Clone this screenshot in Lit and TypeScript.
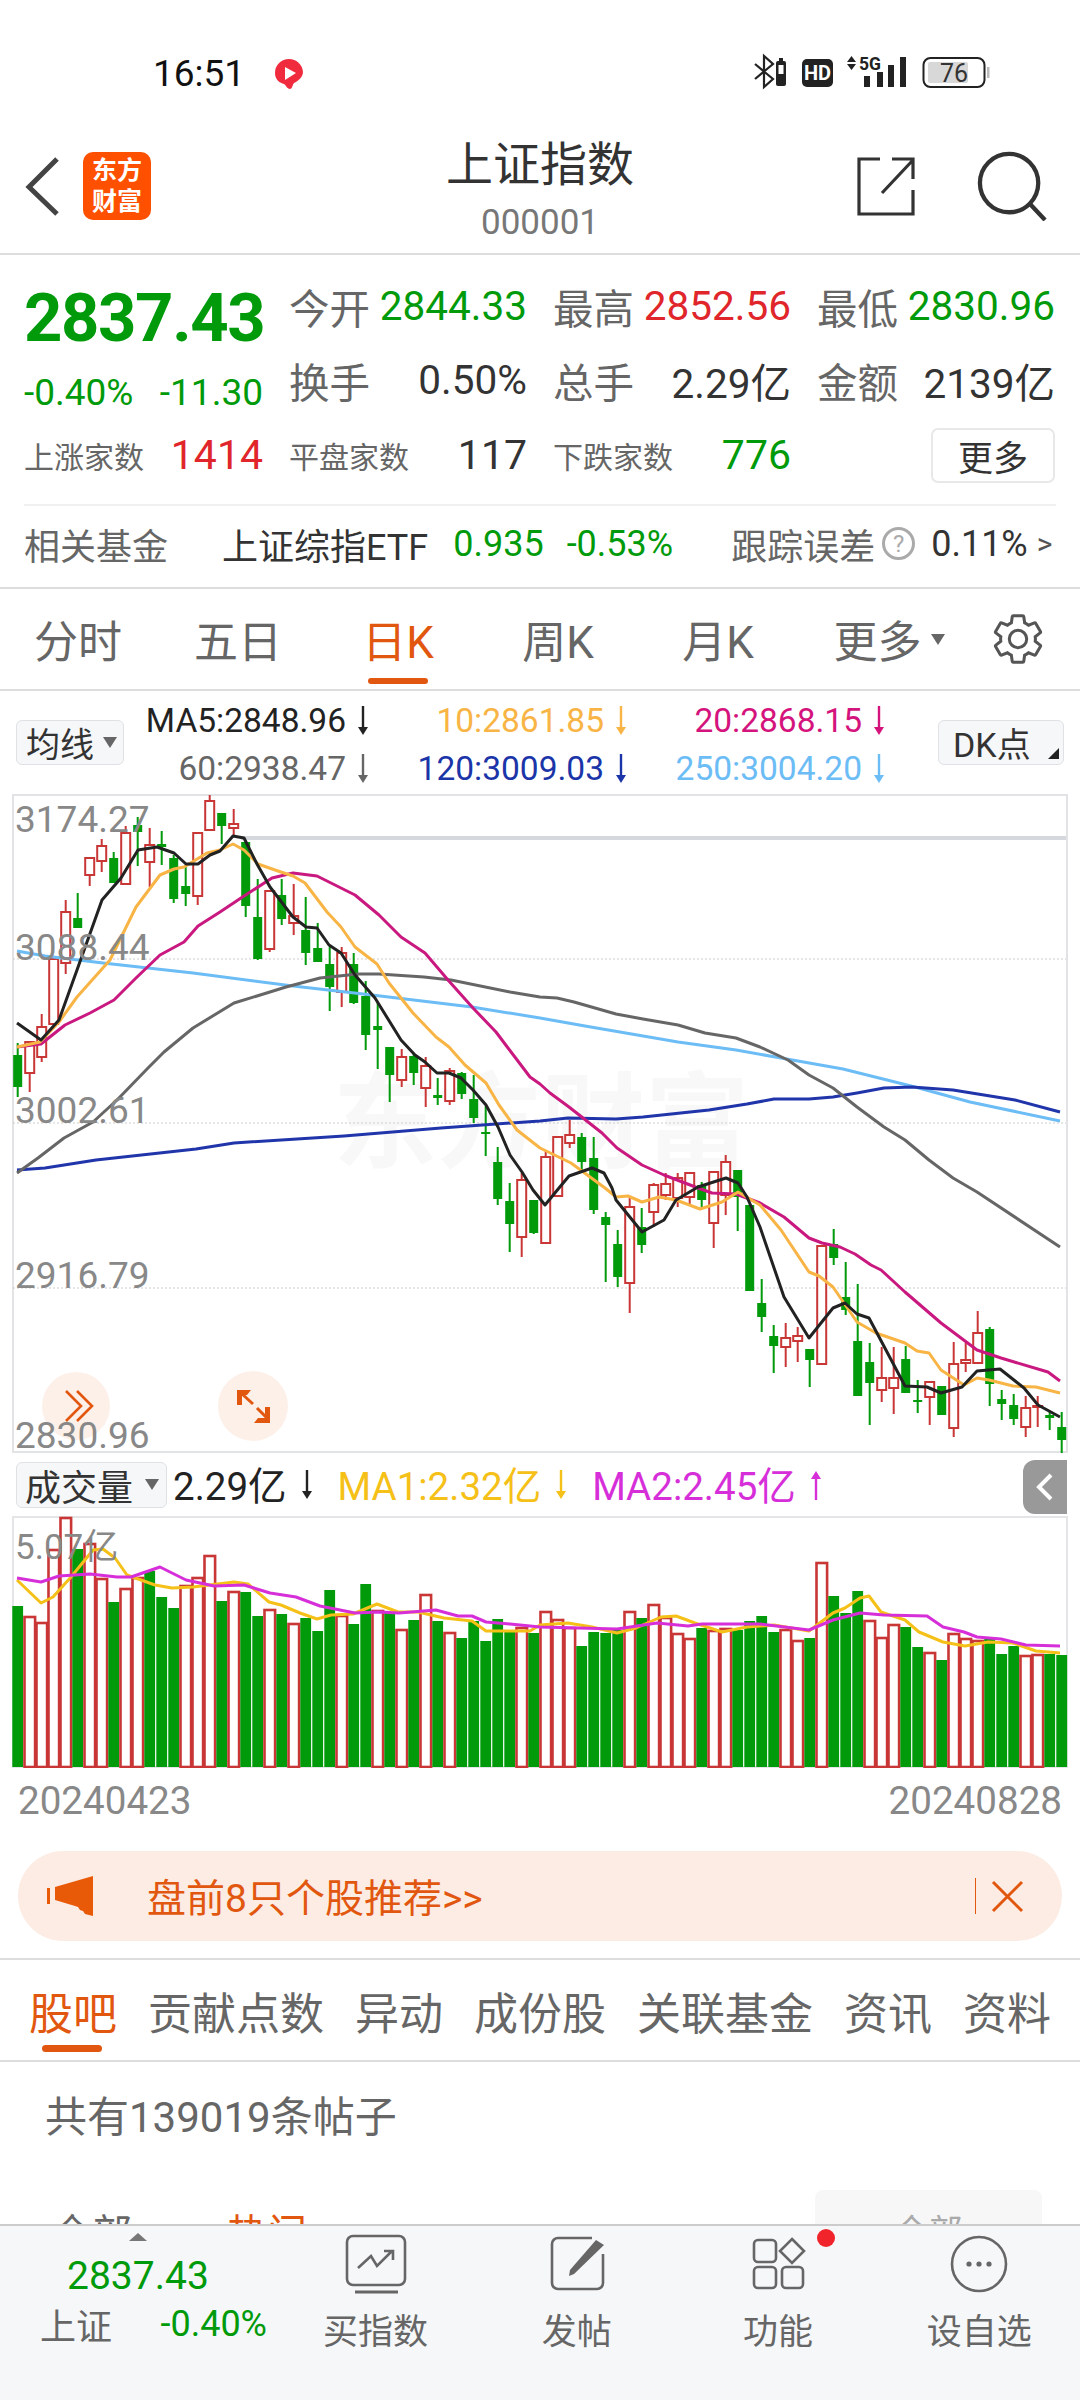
import { LitElement, html, svg, css } from "lit";
import { customElement } from "lit/decorators.js";

// [body top, body bottom, wick top, wick bottom, colour], all in page pixels
type Candle = [number, number, number, number, "r" | "g"];

const CANDLES: Candle[] = [
  [1055, 1087, 1043, 1097, "g"], [1042, 1073, 1042, 1092, "r"], [1027, 1057, 1014, 1062, "r"], [959, 1024, 959, 1024, "r"],
  [912, 963, 900, 974, "r"], [918, 928, 893, 928, "g"], [858, 875, 857, 886, "r"], [846, 861, 839, 872, "r"],
  [858, 883, 852, 883, "g"], [833, 884, 826, 884, "r"], [825, 832, 817, 866, "g"], [845, 862, 828, 887, "r"],
  [844, 847, 831, 865, "g"], [858, 899, 855, 903, "g"], [886, 894, 865, 906, "g"], [833, 896, 833, 905, "r"],
  [801, 830, 795, 830, "r"], [813, 826, 813, 844, "g"], [824, 828, 809, 835, "r"], [842, 906, 842, 917, "g"],
  [917, 959, 879, 960, "g"], [891, 949, 890, 952, "r"], [895, 919, 879, 925, "g"], [916, 923, 884, 935, "r"],
  [930, 953, 897, 965, "g"], [948, 962, 923, 962, "g"], [964, 987, 947, 1011, "g"], [953, 992, 947, 1007, "r"],
  [964, 1003, 953, 1004, "g"], [996, 1035, 981, 1050, "g"], [1026, 1030, 1003, 1069, "g"], [1047, 1075, 1047, 1102, "g"],
  [1057, 1080, 1049, 1087, "r"], [1056, 1073, 1053, 1085, "g"], [1066, 1088, 1057, 1107, "r"], [1095, 1098, 1078, 1105, "g"],
  [1071, 1101, 1068, 1105, "r"], [1073, 1094, 1072, 1099, "g"], [1099, 1118, 1075, 1123, "g"], [1132, 1133, 1106, 1156, "g"],
  [1162, 1199, 1147, 1205, "g"], [1201, 1224, 1183, 1252, "g"], [1180, 1237, 1173, 1257, "r"], [1200, 1233, 1200, 1234, "g"],
  [1157, 1243, 1150, 1243, "r"], [1137, 1196, 1137, 1196, "r"], [1135, 1143, 1120, 1148, "r"], [1137, 1162, 1133, 1170, "g"],
  [1158, 1210, 1137, 1214, "g"], [1217, 1225, 1212, 1282, "g"], [1244, 1277, 1230, 1287, "g"], [1207, 1283, 1198, 1313, "r"],
  [1227, 1245, 1208, 1253, "g"], [1185, 1212, 1183, 1227, "r"], [1184, 1195, 1173, 1200, "r"], [1178, 1198, 1173, 1207, "r"],
  [1173, 1197, 1173, 1204, "r"], [1185, 1200, 1182, 1207, "g"], [1172, 1223, 1172, 1248, "r"], [1162, 1195, 1155, 1215, "r"],
  [1170, 1197, 1170, 1231, "g"], [1205, 1291, 1205, 1291, "g"], [1303, 1317, 1279, 1332, "g"], [1336, 1346, 1325, 1373, "g"],
  [1338, 1347, 1323, 1367, "r"], [1336, 1341, 1327, 1362, "r"], [1349, 1360, 1349, 1387, "g"], [1246, 1364, 1246, 1364, "r"],
  [1244, 1258, 1229, 1265, "g"], [1297, 1310, 1262, 1315, "g"], [1341, 1396, 1284, 1396, "g"], [1362, 1383, 1343, 1425, "g"],
  [1378, 1390, 1347, 1402, "r"], [1378, 1388, 1347, 1414, "r"], [1359, 1393, 1346, 1393, "g"], [1400, 1401, 1380, 1413, "g"],
  [1382, 1397, 1382, 1425, "r"], [1386, 1415, 1386, 1415, "g"], [1364, 1428, 1342, 1437, "r"], [1360, 1363, 1343, 1372, "r"],
  [1333, 1363, 1311, 1363, "r"], [1329, 1384, 1327, 1406, "g"], [1399, 1404, 1390, 1420, "g"], [1405, 1419, 1394, 1425, "g"],
  [1408, 1427, 1396, 1437, "r"], [1406, 1407, 1396, 1427, "r"], [1415, 1418, 1412, 1430, "g"], [1427, 1440, 1412, 1453, "g"],
];

const MA5 = "17,1023 41,1040 59,1020 77,970 102,900 121,878 138,850 157,847 174,853 186,864 198,864 210,855 220,851 233,836 244,838 257,864 270,887 293,917 306,927 317,928 329,945 341,953 355,975 375,998 401,1040 415,1055 425,1062 437,1073 449,1073 461,1078 473,1090 486,1105 498,1127 510,1155 522,1172 533,1190 545,1205 559,1188 569,1176 592,1168 604,1173 612,1188 616,1200 642,1232 664,1220 676,1200 698,1187 726,1178 738,1183 747,1197 760,1227 784,1297 809,1338 833,1308 845,1303 857,1314 869,1318 905,1386 927,1387 941,1393 962,1387 977,1371 1000,1369 1024,1388 1038,1405 1060,1417";
const MA10 = "17,1047 40,1042 59,1022 77,997 110,960 136,907 160,875 174,869 184,867 207,853 220,850 233,844 244,850 258,864 275,870 293,876 305,883 327,912 341,927 355,947 377,964 389,983 413,1013 436,1037 449,1047 465,1065 486,1083 499,1105 517,1130 540,1148 571,1163 605,1188 616,1197 628,1196 642,1202 659,1197 676,1200 700,1209 722,1202 738,1192 760,1205 781,1230 809,1272 819,1276 833,1287 857,1322 876,1333 905,1343 917,1351 929,1353 941,1370 964,1385 977,1378 989,1380 1013,1386 1036,1387 1060,1393";
const MA20 = "17,1047 41,1044 65,1025 90,1013 114,1000 136,978 160,955 184,942 198,926 220,912 241,898 272,878 293,873 317,876 355,895 379,915 401,937 425,953 448,980 473,1008 496,1032 508,1048 530,1077 540,1084 550,1093 569,1107 583,1118 602,1133 617,1148 642,1165 664,1175 698,1188 712,1193 736,1194 760,1203 784,1217 809,1238 822,1243 840,1247 855,1254 871,1265 881,1270 905,1292 941,1323 977,1350 1001,1358 1048,1372 1060,1381";
const MA60 = "17,1173 38,1158 64,1138 93,1122 117,1100 148,1068 164,1052 193,1028 234,1003 257,996 286,987 320,978 358,974 379,974 424,977 451,980 510,992 540,997 557,998 574,1002 616,1014 643,1019 678,1025 705,1033 736,1038 760,1047 788,1060 809,1075 833,1088 857,1107 884,1127 905,1140 929,1160 953,1178 977,1192 1060,1247";
const MA120 = "17,1170 45,1168 96,1160 196,1149 234,1143 344,1136 441,1128 540,1121 568,1118 616,1119 643,1117 709,1110 747,1104 774,1099 809,1099 833,1097 857,1093 884,1088 912,1087 953,1090 1015,1100 1060,1112";
const MA250 = "17,951 45,956 103,963 193,973 293,986 372,995 472,1007 540,1018 585,1026 678,1042 736,1050 781,1058 843,1069 915,1087 970,1102 1060,1121";

// distance of each volume bar's top from the top of the volume panel
const VOL_TOPS = [90, 100, 106, 33, 1, 33, 27, 62, 86, 72, 61, 55, 81, 92, 69, 61, 39, 85, 75, 76, 100, 93, 98, 107, 102, 115, 74, 99, 108, 68, 94, 97, 113, 104, 78, 105, 116, 122, 105, 125, 103, 116, 111, 117, 95, 103, 111, 130, 116, 117, 114, 95, 102, 88, 101, 117, 122, 112, 114, 112, 114, 105, 100, 116, 113, 124, 122, 46, 80, 97, 75, 104, 121, 108, 111, 131, 136, 144, 117, 122, 124, 121, 138, 130, 139, 138, 138, 139];
const VOL_COLORS = "grrrrgrrgrrgggrrrgrggrgrgggrggrgrgrgrgggggrgrrrggggrgrrrrgrrggggrrgrgggrrrggrgrrrgggrrgg";

const VOL_MA1 = "17,1580 41,1603 53,1597 71,1577 93,1550 103,1549 115,1558 127,1575 155,1585 172,1588 193,1587 234,1582 248,1584 269,1602 281,1605 300,1613 317,1619 331,1615 353,1614 377,1604 398,1612 418,1612 444,1618 472,1621 486,1631 513,1631 530,1631 540,1625 568,1623 592,1627 617,1633 636,1628 661,1617 676,1616 695,1623 722,1632 747,1627 774,1625 809,1631 833,1613 845,1608 860,1598 869,1596 881,1612 905,1620 919,1632 943,1642 965,1646 988,1642 1013,1643 1036,1651 1060,1653";
const VOL_MA2 = "17,1578 41,1582 59,1576 90,1574 117,1577 131,1577 160,1567 186,1580 214,1586 244,1585 270,1593 296,1597 320,1606 355,1613 379,1612 399,1613 436,1610 458,1616 472,1616 486,1622 510,1624 540,1627 617,1629 657,1623 688,1626 702,1624 760,1624 809,1630 833,1620 860,1613 884,1615 927,1616 943,1627 964,1632 977,1637 1001,1639 1026,1645 1060,1646";

const RED = "#c93636";
const GREEN = "#009a0a";
const barX = (i: number) => 17.7 + 12 * i;

const arrow = (color: string, up = false) => html`
  <svg class="arrow" viewBox="0 0 12 30" style="color:${color}">
    ${up
      ? svg`<path d="M6 30V4" stroke="currentColor" stroke-width="2.4" /><path d="M1 9L6 1l5 8z" fill="currentColor" />`
      : svg`<path d="M6 0v26" stroke="currentColor" stroke-width="2.4" /><path d="M1 21l5 8 5-8z" fill="currentColor" />`}
  </svg>
`;

@customElement("kline-chart")
class KlineChart extends LitElement {
  static styles = css`
    :host { display: block; height: 659px; }
    svg { display: block; }
    .tick { font: 37px Roboto, sans-serif; fill: #888; }
    .mark { font: bold 104px "Noto Sans CJK SC", sans-serif; fill: #f8f8f8; }
    polyline { fill: none; stroke-width: 3; stroke-linejoin: round; }
  `;

  private candle(c: Candle, i: number) {
    const x = barX(i);
    const color = c[4] === "r" ? RED : GREEN;
    return svg`
      <line x1=${x} x2=${x} y1=${c[2]} y2=${c[3]} stroke=${color} stroke-width="2" />
      ${c[4] === "r"
        ? svg`<rect x=${x - 4.5} y=${c[0]} width="9" height=${c[1] - c[0]} fill="#fff" stroke=${color} stroke-width="2" />`
        : svg`<rect x=${x - 4.5} y=${c[0]} width="9" height=${Math.max(2, c[1] - c[0])} fill=${color} />`}
    `;
  }

  render() {
    return html`
      <svg width="1080" height="659" viewBox="0 794 1080 659">
        <text class="mark" x="333" y="1160">东方财富</text>
        <rect x="13" y="795" width="1054" height="657" fill="none" stroke="#e2e3e5" stroke-width="2" />
        <line x1="241" x2="1066" y1="838" y2="838" stroke="#d5d9dd" stroke-width="4" />
        ${[959, 1123, 1288].map(
          (y) => svg`<line x1="13" x2="1066" y1=${y} y2=${y} stroke="#ccc" stroke-dasharray="2 2" />`,
        )}
        <circle cx="76" cy="1406" r="34" fill="#fdf0e9" />
        <circle cx="253" cy="1406" r="35" fill="#fdf0e9" />
        <path d="M66 1391l15 15-15 15M77 1391l15 15-15 15" fill="none" stroke="#e2570f" stroke-width="2.6" />
        <path d="M237 1390h14l-4 5h-5v10h-5zM270 1423h-16l4-5h7v-11h5z" fill="#e2570f" />
        <path d="M241 1393l12 11M257 1408l11 11" stroke="#e2570f" stroke-width="3" />
        ${CANDLES.map((c, i) => this.candle(c, i))}
        <polyline points=${MA250} stroke="#6cbcf5" />
        <polyline points=${MA120} stroke="#2135ab" />
        <polyline points=${MA60} stroke="#666" />
        <polyline points=${MA20} stroke="#c9187f" />
        <polyline points=${MA10} stroke="#f8b445" />
        <polyline points=${MA5} stroke="#222" />
        <text class="tick" x="15" y="832">3174.27</text>
        <text class="tick" x="15" y="960">3088.44</text>
        <text class="tick" x="15" y="1123">3002.61</text>
        <text class="tick" x="15" y="1288">2916.79</text>
        <text class="tick" x="15" y="1448">2830.96</text>
      </svg>
    `;
  }
}

@customElement("volume-chart")
class VolumeChart extends LitElement {
  static styles = css`
    :host { display: block; height: 252px; }
    svg { display: block; }
    .tick { font: 35px Roboto, "Noto Sans CJK SC", sans-serif; fill: #888; }
    polyline { fill: none; stroke-width: 3; stroke-linejoin: round; }
  `;

  render() {
    return html`
      <svg width="1080" height="252" viewBox="0 1516 1080 252">
        <rect x="13" y="1517" width="1054" height="250" fill="none" stroke="#e4e5e7" stroke-width="2" />
        ${VOL_TOPS.map((t, i) => {
          const x = barX(i);
          const top = 1516 + t;
          return VOL_COLORS[i] === "r"
            ? svg`<rect x=${x - 5.2} y=${top + 1} width="10.6" height=${1766 - top} fill="#fff" stroke=${RED} stroke-width="2.6" />`
            : svg`<rect x=${x - 5.4} y=${top} width="10.8" height=${1767 - top} fill=${GREEN} />`;
        })}
        <polyline points=${VOL_MA1} stroke="#f5c018" />
        <polyline points=${VOL_MA2} stroke="#d62fd9" />
        <text class="tick" x="15" y="1559">5.07亿</text>
      </svg>
    `;
  }
}

@customElement("app-root")
class AppRoot extends LitElement {
  static styles = css`
    :host {
      display: flex;
      flex-direction: column;
      width: 1080px;
      height: 2400px;
      overflow: hidden;
      background: #fff;
      font-family: Roboto, "Noto Sans CJK SC", sans-serif;
      color: #333;
    }
    svg { display: block; flex: none; }
    .up { color: #e0252b; }
    .down { color: #009a0a; }
    .label { color: #666; }

    .status { height: 135px; flex: none; display: flex; align-items: center; padding: 12px 0 0 153px; box-sizing: border-box; }
    .status .time { font-size: 37px; color: #111; width: 121px; }
    .status .right { margin-left: 446px; margin-top: -8px; }

    .nav { height: 120px; flex: none; display: flex; align-items: center; border-bottom: 2px solid #ddd; box-sizing: border-box; padding: 0 0 17px 22px; position: relative; }
    .logo { width: 68px; height: 68px; margin-left: 21px; border-radius: 10px; background: #ff5000; color: #fff; font-size: 25px; font-weight: 700; line-height: 31px; text-align: center; display: flex; flex-direction: column; justify-content: center; }
    .title { position: absolute; left: 0; right: 0; top: 0; text-align: center; }
    .title b { display: block; font-weight: 400; font-size: 47px; line-height: 60px; }
    .title span { display: block; font-size: 35px; line-height: 40px; color: #777; margin-top: 8px; }
    .nav .tools { margin-left: auto; margin-right: 33px; display: flex; gap: 61px; align-items: center; }

    .quote { flex: none; display: grid; grid-template-columns: 239px 238px 238px 238px; grid-template-rows: 74px 74px 76px; column-gap: 26px; padding: 14px 24px 0; align-items: center; }
    .price { font-size: 67px; font-weight: 700; letter-spacing: -1.4px; padding-top: 24px; line-height: 70px; white-space: nowrap; }
    .change { display: flex; justify-content: space-between; font-size: 37px; padding-top: 24px; }
    .cell { display: flex; justify-content: space-between; align-items: center; font-size: 40.5px; white-space: nowrap; }
    .small .label-sm { font-size: 30px; color: #666; }
    .small { font-size: 41px; }
    .more-btn { justify-self: end; width: 124px; height: 55px; box-sizing: border-box; border: 2px solid #e8e8e8; border-radius: 7px; font-size: 35px; display: flex; align-items: center; justify-content: center; }

    .related { flex: none; margin: 11px 24px 0; height: 83px; padding-bottom: 6px; border-top: 2px solid #f0f0f0; box-sizing: border-box; display: flex; align-items: center; font-size: 36px; white-space: nowrap; }
    .related .etf { margin-left: 54px; }
    .related .num { margin-left: 25px; }
    .related .diff { margin-left: 23px; }
    .related .err { margin-left: 58px; }
    .related .help { width: 33px; height: 33px; border: 3px solid #aaa; box-sizing: border-box; border-radius: 50%; color: #aaa; font-size: 24px; display: flex; align-items: center; justify-content: center; margin: 0 16px 0 7px; }
    .related .gt { margin-left: 9px; font-size: 30px; color: #555; }
    .line { height: 2px; flex: none; background: #ddd; }

    .periods { flex: none; height: 102px; display: grid; grid-template-columns: repeat(6, 160px) 120px; margin-left: -2px; border-bottom: 2px solid #ddd; box-sizing: border-box; font-size: 44px; color: #666; }
    .periods > div { display: flex; align-items: center; justify-content: center; position: relative; }
    .periods .on { color: #e2570f; }
    .periods .on::after { content: ""; position: absolute; left: 50px; width: 60px; height: 6px; bottom: 5px; border-radius: 3px; background: #e2570f; }
    .periods .more { padding-left: 22px; }
    .tri { display: inline-block; width: 0; height: 0; border: 7px solid transparent; border-top: 11px solid #666; border-bottom: 0; margin-left: 9px; }

    .legend-bar { flex: none; height: 103px; display: flex; align-items: center; box-sizing: border-box; position: relative; }
    .pill { box-sizing: border-box; height: 45px; background: #f6f7f9; border: 1.5px solid #e0e1e4; border-radius: 6px; display: flex; align-items: center; font-size: 34px; white-space: nowrap; }
    .legend-bar .pick { width: 108px; margin-left: 16px; padding-left: 9px; }
    .legend-bar .dk { width: 126px; margin-left: auto; margin-right: 16px; padding-left: 14px; position: relative; }
    .dk::after { content: ""; position: absolute; right: 4px; bottom: 5px; border-left: 11px solid transparent; border-bottom: 11px solid #222; }
    .legend { display: grid; grid-template-columns: repeat(3, 258px); grid-auto-rows: 48px; margin: 4px 0 0 -6px; font-size: 33.5px; }
    .legend > div { display: flex; align-items: center; justify-content: flex-end; gap: 11px; padding-right: 7px; white-space: nowrap; }
    .arrow { width: 12px; height: 30px; }

    .vol-bar { flex: none; height: 63px; display: flex; align-items: center; position: relative; font-size: 38.5px; white-space: nowrap; }
    .vol-bar > span { margin-top: -3px; }
    .vol-bar .pick { width: 151px; margin-left: 16px; padding-left: 8px; height: 46px; font-size: 36px; margin-right: 6px; }
    .vol-bar .arrow { margin: 0 25px 0 14px; }
    .vol-bar .pick .tri { margin-left: 12px; }
    .collapse { position: absolute; right: 13px; top: 7px; width: 44px; height: 54px; border-radius: 12px 0 0 12px; background: #999; display: flex; align-items: center; justify-content: center; }

    .dates { flex: none; height: 83px; padding: 13px 18px 0; box-sizing: border-box; display: flex; justify-content: space-between; font-size: 38.6px; line-height: 40px; color: #888; }

    .banner { flex: none; height: 90px; margin: 0 18px; border-radius: 45px; background: #fcece3; display: flex; align-items: center; color: #e2570f; font-size: 39px; }
    .banner .speak { margin-left: 29px; }
    .banner .txt { margin-left: 54px; margin-top: -2px; }
    .banner .sep { margin-left: auto; width: 1.5px; height: 36px; background: #e2570f; }
    .banner .close { margin: 0 38px 0 15px; }

    .news-tabs { flex: none; margin-top: 17px; height: 104px; box-sizing: border-box; padding: 2px 0 0 29px; border-top: 2px solid #ddd; border-bottom: 2px solid #ddd; display: flex; gap: 31px; align-items: center; font-size: 44px; color: #666; white-space: nowrap; }
    .news-tabs > div { position: relative; }
    .news-tabs .on { color: #e2570f; }
    .news-tabs .on::after { content: ""; position: absolute; left: 13px; width: 60px; height: 7px; bottom: -9px; border-radius: 4px; background: #e2570f; }

    .posts { flex: 1; min-height: 0; overflow: hidden; padding: 0 38px 0 45px; }
    .posts .count { font-size: 42px; line-height: 50px; color: #666; margin-top: 31px; }
    .filter { margin-top: 47px; display: flex; font-size: 40px; }
    .filter span { margin-top: 12px; }
    .filter .hot { margin-left: 95px; color: #e2570f; }
    .filter .all { margin-left: 7px; }
    .filter .box { margin-left: auto; width: 227px; height: 90px; background: #f7f7f8; border-radius: 8px; display: flex; justify-content: center; color: #aaa; font-size: 34px; padding-top: 15px; box-sizing: border-box; }

    .dock { flex: none; height: 176px; background: #f6f7f9; border-top: 2px solid #ccc; box-sizing: border-box; display: flex; }
    .dock .left { width: 275px; flex: none; box-sizing: border-box; padding-top: 7px; }
    .dock .mini { width: 0; height: 0; border: 9px solid transparent; border-top: 0; border-bottom: 8px solid #777; margin-left: 129px; }
    .dock .p { padding-left: 67px; font-size: 39px; line-height: 44px; margin-top: 13px; }
    .dock .row { display: flex; justify-content: space-between; padding: 0 8px 0 40px; margin-top: 0; font-size: 36px; align-items: center; }
    .dock .row span:first-child { color: #666; }
    .dock .item { flex: 1; display: flex; flex-direction: column; align-items: center; font-size: 35px; color: #666; padding-top: 8px; position: relative; }
    .dock .item span { line-height: 40px; margin-top: 19px; }
    .dot { position: absolute; left: 139px; top: 3px; width: 18px; height: 18px; border-radius: 50%; background: #f0242a; }
    .ico { fill: none; stroke: #666; stroke-width: 2.6; }
  `;

  private statusIcons() {
    return html`
      <svg class="right" width="245" height="42" viewBox="750 50 245 42">
        <path d="M755 65l18 15-9 8V57l9 8-18 15" fill="none" stroke="#222" stroke-width="2.2" />
        <rect x="776" y="62" width="10" height="25" rx="2" fill="#222" />
        <rect x="778.5" y="66" width="5" height="9" fill="#fff" />
        <rect x="779" y="59" width="4" height="3" fill="#222" />
        <rect x="802" y="60" width="31" height="28" rx="5" fill="#222" />
        <text x="817.5" y="81" text-anchor="middle" font-size="20" font-weight="700" fill="#fff" font-family="Roboto">HD</text>
        <path d="M847 63l4.5-6 4.5 6zM847 65h9l-4.5 6z" fill="#222" />
        <text x="859" y="71" font-size="18" font-weight="700" fill="#222" font-family="Roboto" textLength="22" lengthAdjust="spacingAndGlyphs">5G</text>
        <rect x="864" y="77" width="6" height="11" fill="#222" />
        <rect x="877" y="73" width="6" height="15" fill="#222" />
        <rect x="888" y="66" width="6" height="22" fill="#222" />
        <rect x="900" y="58" width="6" height="30" fill="#222" />
        <rect x="923.5" y="59" width="61" height="29" rx="7" fill="none" stroke="#222" stroke-width="2" />
        <rect x="928" y="63" width="40" height="21" rx="2" fill="#d8d8d8" />
        <rect x="987" y="68" width="2.5" height="11" fill="#bbb" />
        <text x="954" y="83" text-anchor="middle" font-size="25" fill="#333" font-family="Roboto">76</text>
      </svg>
    `;
  }

  private cell(label: string, value: string, cls = "") {
    return html`<div class="cell"><span class="label">${label}</span><span class=${cls}>${value}</span></div>`;
  }

  private smallCell(label: string, value: string, cls = "") {
    return html`<div class="cell small"><span class="label-sm">${label}</span><span class=${cls}>${value}</span></div>`;
  }

  render() {
    return html`
      <div class="status">
        <span class="time">16:51</span>
        <svg width="30" height="32" viewBox="0 0 30 32">
          <path d="M15 1a14 14 0 0 0-14 14c0 7 5 10 9 11 2 1 3 5 6 5 2 0 2-3 4-6 4-2 9-6 9-11A14 14 0 0 0 15 1z" fill="#ef2b3d" />
          <path d="M11 9l11 6-11 7z" fill="#fff" />
        </svg>
        ${this.statusIcons()}
      </div>

      <div class="nav">
        <div class="title"><b>上证指数</b><span>000001</span></div>
        <svg width="40" height="60" viewBox="0 0 40 60">
          <path d="M35 3L7 31l28 27" fill="none" stroke="#444" stroke-width="5" />
        </svg>
        <div class="logo"><span>东方</span><span>财富</span></div>
        <div class="tools">
          <svg width="60" height="60" viewBox="0 0 60 60" fill="none" stroke="#333" stroke-width="3.2">
            <path d="M24 3H3v55h54V34" />
            <path d="M26 37L57 4M36 3h21v20" />
          </svg>
          <svg width="70" height="70" viewBox="0 0 72 72" fill="none" stroke="#333" stroke-width="4.4">
            <circle cx="33" cy="33" r="30" />
            <path d="M55 55l15 16" />
          </svg>
        </div>
      </div>

      <div class="quote">
        <div class="price down">2837.43</div>
        ${this.cell("今开", "2844.33", "down")}
        ${this.cell("最高", "2852.56", "up")}
        ${this.cell("最低", "2830.96", "down")}

        <div class="change down"><span>-0.40%</span><span>-11.30</span></div>
        ${this.cell("换手", "0.50%")}
        ${this.cell("总手", "2.29亿")}
        ${this.cell("金额", "2139亿")}

        ${this.smallCell("上涨家数", "1414", "up")}
        ${this.smallCell("平盘家数", "117")}
        ${this.smallCell("下跌家数", "776", "down")}
        <div class="more-btn">更多</div>
      </div>

      <div class="related">
        <span class="label">相关基金</span>
        <span class="etf">上证综指ETF</span>
        <span class="num down">0.935</span>
        <span class="diff down">-0.53%</span>
        <span class="err label">跟踪误差</span>
        <span class="help">?</span>
        <span>0.11%</span>
        <span class="gt">&gt;</span>
      </div>
      <div class="line"></div>

      <div class="periods">
        <div>分时</div>
        <div>五日</div>
        <div class="on">日K</div>
        <div>周K</div>
        <div>月K</div>
        <div class="more">更多<i class="tri"></i></div>
        <div>
          <svg width="58" height="58" viewBox="0 0 24 24" fill="none" stroke="#555" stroke-width="1.25">
            <path d="M19.14 12.94c.04-.3.06-.61.06-.94 0-.32-.02-.64-.07-.94l2.03-1.58c.18-.14.23-.41.12-.61l-1.92-3.32c-.12-.22-.37-.29-.59-.22l-2.39.96c-.5-.38-1.03-.7-1.62-.94l-.36-2.54c-.04-.24-.24-.41-.48-.41h-3.84c-.24 0-.43.17-.47.41l-.36 2.54c-.59.24-1.13.57-1.62.94l-2.39-.96c-.22-.08-.47 0-.59.22L2.74 8.87c-.12.21-.08.47.12.61l2.03 1.58c-.05.3-.09.63-.09.94s.02.64.07.94l-2.03 1.58c-.18.14-.23.41-.12.61l1.92 3.32c.12.22.37.29.59.22l2.39-.96c.5.38 1.03.7 1.62.94l.36 2.54c.05.24.24.41.48.41h3.84c.24 0 .44-.17.47-.41l.36-2.54c.59-.24 1.13-.56 1.62-.94l2.39.96c.22.08.47 0 .59-.22l1.92-3.32c.12-.22.07-.47-.12-.61l-2.01-1.58z" />
            <circle cx="12" cy="12" r="3.6" />
          </svg>
        </div>
      </div>

      <div class="legend-bar">
        <div class="pill pick">均线<i class="tri"></i></div>
        <div class="legend">
          <div style="color:#222">MA5:2848.96${arrow("#222")}</div>
          <div style="color:#f8b445">10:2861.85${arrow("#f8b445")}</div>
          <div style="color:#d4147c">20:2868.15${arrow("#d4147c")}</div>
          <div style="color:#666">60:2938.47${arrow("#666")}</div>
          <div style="color:#1b35a8">120:3009.03${arrow("#1b35a8")}</div>
          <div style="color:#6cbcf5">250:3004.20${arrow("#6cbcf5")}</div>
        </div>
        <div class="pill dk">DK点</div>
      </div>

      <kline-chart></kline-chart>

      <div class="vol-bar">
        <div class="pill pick">成交量<i class="tri"></i></div>
        <span style="color:#222">2.29亿</span>${arrow("#222")}
        <span style="color:#f5c018">MA1:2.32亿</span>${arrow("#f5c018")}
        <span style="color:#d62fd9">MA2:2.45亿</span>${arrow("#d62fd9", true)}
        <div class="collapse">
          <svg width="18" height="28" viewBox="0 0 18 28"><path d="M15 2L3 14l12 12" fill="none" stroke="#fff" stroke-width="4" /></svg>
        </div>
      </div>

      <volume-chart></volume-chart>

      <div class="dates"><span>20240423</span><span>20240828</span></div>

      <div class="banner">
        <svg class="speak" width="46" height="40" viewBox="0 0 46 40">
          <rect x="0" y="12" width="3" height="16" fill="#e85a08" />
          <path d="M8 11l38-11v40l-8-2-2-3-3-1-2-3-3-1-20-6z" fill="#e85a08" />
        </svg>
        <span class="txt">盘前8只个股推荐&gt;&gt;</span>
        <i class="sep"></i>
        <svg class="close" width="33" height="33" viewBox="0 0 33 33"><path d="M2 2l29 29M31 2L2 31" stroke="#e2570f" stroke-width="3" /></svg>
      </div>

      <div class="news-tabs">
        <div class="on">股吧</div>
        <div>贡献点数</div>
        <div>异动</div>
        <div>成份股</div>
        <div>关联基金</div>
        <div>资讯</div>
        <div>资料</div>
      </div>

      <div class="posts">
        <div class="count">共有139019条帖子</div>
        <div class="filter">
          <span class="all label">全部</span>
          <span class="hot">热门</span>
          <div class="box">全部</div>
        </div>
      </div>

      <div class="dock">
        <div class="left">
          <div class="mini"></div>
          <div class="p down">2837.43</div>
          <div class="row"><span>上证</span><span class="down">-0.40%</span></div>
        </div>
        <div class="item">
          <svg width="70" height="60" viewBox="341 2234 70 60">
            <rect class="ico" x="347" y="2236" width="58" height="49" rx="6" />
            <path d="M355 2292h43" stroke="#666" stroke-width="3" />
            <path class="ico" d="M358 2268l13-12 6 10 15-15M384 2251h9v9" />
          </svg>
          <span>买指数</span>
        </div>
        <div class="item">
          <svg width="70" height="60" viewBox="542 2234 70 60">
            <path class="ico" d="M592 2238h-34a6 6 0 0 0-6 6v39a6 6 0 0 0 6 6h39a6 6 0 0 0 6-6v-29" />
            <path d="M596 2240l8 5-30 29-5 2 1-6z" fill="#666" />
          </svg>
          <span>发帖</span>
        </div>
        <div class="item">
          <svg width="70" height="60" viewBox="743 2234 70 60">
            <rect class="ico" x="754" y="2240" width="22" height="22" rx="4" />
            <path class="ico" d="M792 2239l12 12-12 12-12-12z" />
            <rect class="ico" x="754" y="2267" width="22" height="21" rx="4" />
            <rect class="ico" x="782" y="2267" width="21" height="21" rx="4" />
          </svg>
          <span>功能</span>
          <i class="dot"></i>
        </div>
        <div class="item">
          <svg width="70" height="60" viewBox="944 2234 70 60">
            <circle class="ico" cx="979" cy="2264" r="27" />
            <circle cx="969" cy="2264" r="2.6" fill="#666" />
            <circle cx="979" cy="2264" r="2.6" fill="#666" />
            <circle cx="989" cy="2264" r="2.6" fill="#666" />
          </svg>
          <span>设自选</span>
        </div>
      </div>
    `;
  }
}
